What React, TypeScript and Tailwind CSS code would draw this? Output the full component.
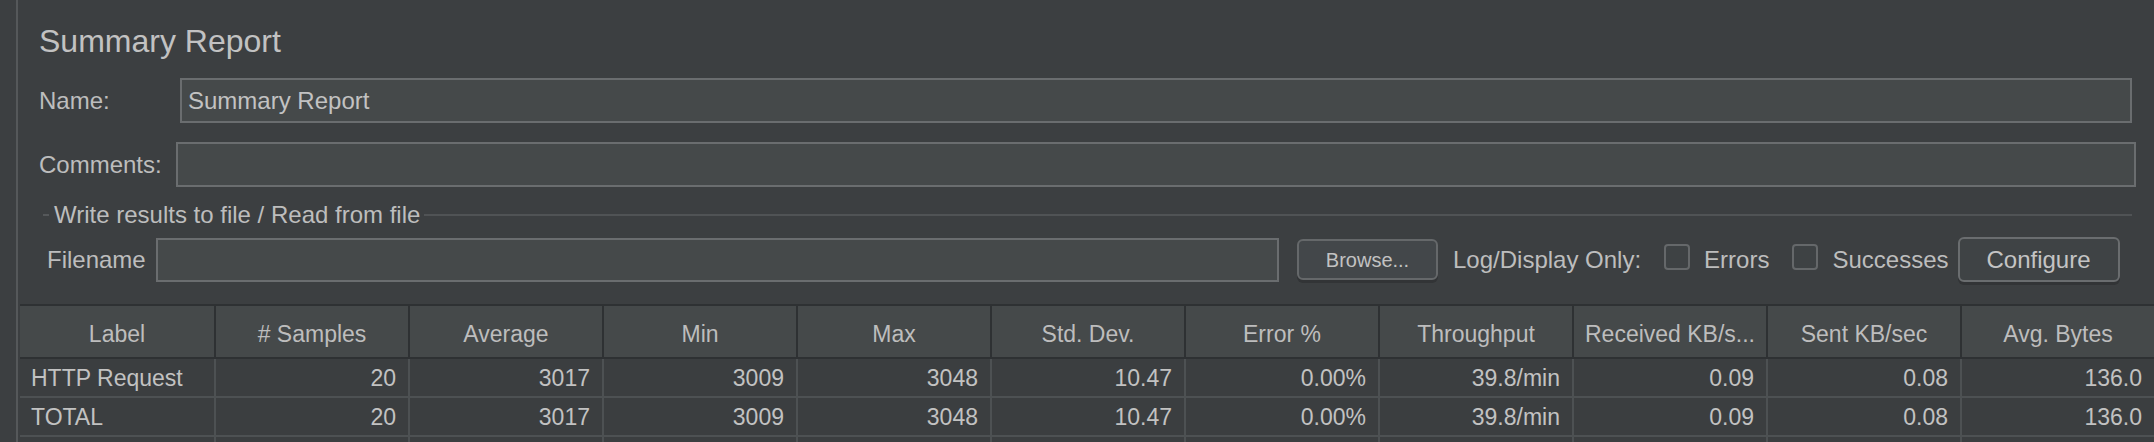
const columns = [
  "Label",
  "# Samples",
  "Average",
  "Min",
  "Max",
  "Std. Dev.",
  "Error %",
  "Throughput",
  "Received KB/s...",
  "Sent KB/sec",
  "Avg. Bytes",
];

const rows = [
  ["HTTP Request", "20", "3017", "3009", "3048", "10.47", "0.00%", "39.8/min", "0.09", "0.08", "136.0"],
  ["TOTAL", "20", "3017", "3009", "3048", "10.47", "0.00%", "39.8/min", "0.09", "0.08", "136.0"],
  ["", "", "", "", "", "", "", "", "", "", ""],
];

function Checkbox({ label }: { label: string }) {
  return (
    <div className="flex items-center">
      <div className="w-[26px] h-[26px] mb-[6px] rounded-[4px] border-2 border-[#65686a] bg-[#3e4244]" />
      <span className="ml-[14px]">{label}</span>
    </div>
  );
}

export default function App() {
  return (
    <div
      className="w-[2154px] h-[442px] overflow-hidden flex bg-[#3c3f41] text-[#bdbdbd] text-[24px] leading-[28px]"
      style={{ fontFamily: '"Liberation Sans", Arial, sans-serif' }}
    >
      <div className="w-[16px] shrink-0" />

      <div className="flex-1 flex flex-col border-l-2 border-[#55585a]">
        {/* title */}
        <h1 className="pl-[21px] pt-[23px] text-[32px] leading-[36px] text-[#c2c2c2]">
          Summary Report
        </h1>

        {/* name */}
        <div className="flex items-center mt-[19px] pl-[21px] pr-[22px]">
          <span className="w-[141px] shrink-0">Name:</span>
          <div className="flex-1 h-[45px] flex items-center px-[6px] border-2 border-[#6a6d6f] bg-[#45494a] text-[#c2c2c2]">
            Summary Report
          </div>
        </div>

        {/* comments */}
        <div className="flex items-center mt-[19px] pl-[21px] pr-[18px]">
          <span className="w-[137px] shrink-0">Comments:</span>
          <div className="flex-1 h-[45px] border-2 border-[#6a6d6f] bg-[#45494a]" />
        </div>

        {/* file group */}
        <div className="flex items-center mt-[14px] pl-[25px] pr-[22px]">
          <div className="w-[6px] h-[2px] bg-[#55585a]" />
          <span className="ml-[5px]">Write results to file / Read from file</span>
          <div className="flex-1 ml-[4px] h-[2px] bg-[#505355]" />
        </div>

        <div className="flex items-center mt-[8px] pl-[29px]">
          <span className="w-[109px] shrink-0">Filename</span>
          <div className="w-[1123px] h-[44px] border-2 border-[#6a6d6f] bg-[#45494a]" />
          <button className="ml-[18px] w-[141px] h-[41px] rounded-[6px] border-2 border-[#65686a] bg-[#43474a] text-[20px] text-[#c2c2c2] shadow-[0_3px_0_#323436]">
            Browse...
          </button>
          <span className="ml-[15px]">Log/Display Only:</span>
          <div className="ml-[23px]">
            <Checkbox label="Errors" />
          </div>
          <div className="ml-[23px]">
            <Checkbox label="Successes" />
          </div>
          <button className="ml-[9px] w-[162px] h-[45px] rounded-[6px] border-2 border-[#6a6d6f] bg-[#3f4345] text-[#c4c4c4] shadow-[0_3px_0_#323436]">
            Configure
          </button>
        </div>

        {/* table */}
        <div className="mt-[22px] ml-[2px] flex-1 bg-[#3b3e40]">
          <div className="grid grid-cols-11 border-y-2 border-[#2e3133] bg-[#45494a]">
            {columns.map((c, i) => (
              <div
                key={c}
                className={`h-[51px] flex items-center justify-center pt-[4px] text-[23px] text-[#bdbdbd] whitespace-nowrap overflow-hidden ${
                  i > 0 ? "border-l-2 border-[#2e3133]" : ""
                }`}
              >
                {c}
              </div>
            ))}
          </div>

          {rows.map((r, ri) => (
            <div key={ri} className="grid grid-cols-11 border-b-2 border-[#4d5153]">
              {r.map((v, i) => (
                <div
                  key={i}
                  className={`h-[37px] flex items-center text-[23px] text-[#c2c2c2] whitespace-nowrap ${
                    i === 0 ? "justify-start pl-[11px]" : "justify-end pr-[12px] border-l-2 border-[#4d5153]"
                  }`}
                >
                  {v}
                </div>
              ))}
            </div>
          ))}
        </div>
      </div>
    </div>
  );
}
